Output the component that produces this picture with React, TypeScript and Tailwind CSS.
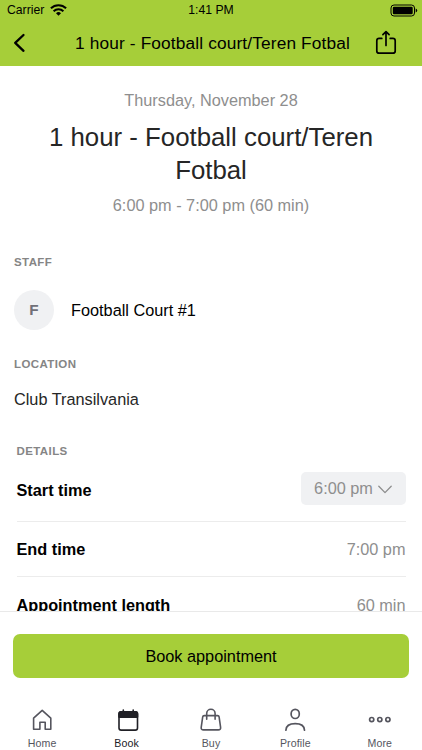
import React, { useState } from 'react';

type TabId = 'home' | 'book' | 'buy' | 'profile' | 'more';

const HomeIcon = () => (
  <svg width="24" height="24" viewBox="0 0 24 24" fill="none" stroke="currentColor" strokeWidth="1.6" strokeLinejoin="round">
    <path d="M3.6 11.2 12.2 3.3l8.600 7.900v11h-5.600v-6.900H9.900v6.900H3.600z" />
  </svg>
);

const BookIcon = () => (
  <svg width="24" height="24" viewBox="0 0 24 24" fill="none" stroke="currentColor" strokeWidth="1.6" strokeLinejoin="round">
    <rect x="4" y="4.700" width="18.500" height="18.400" rx="2.200" />
    <path d="M4 6.900q0-2.200 2.200-2.200h14.100q2.200 0 2.200 2.200v3.200H4z" fill="currentColor" />
    <path d="M8.300 3v2M18.200 3v2" strokeLinecap="round" />
  </svg>
);

const BuyIcon = () => (
  <svg width="24" height="24" viewBox="0 0 24 24" fill="none" stroke="currentColor" strokeWidth="1.6" strokeLinecap="round" strokeLinejoin="round">
    <path d="M5.200 8.600h13.400q1.300 0 1.500 1.300l1.500 10.400q.3 2.600-2.300 2.600H4.500q-2.600 0-2.300-2.600L3.700 9.900q.2-1.300 1.500-1.300z" />
    <path d="M7.700 12.200V6.500a4.200 4.200 0 0 1 8.400 0v5.700" />
  </svg>
);

const ProfileIcon = () => (
  <svg width="24" height="24" viewBox="0 0 24 24" fill="none" stroke="currentColor" strokeWidth="1.7" strokeLinecap="round">
    <ellipse cx="12.200" cy="6.900" rx="4.100" ry="4.600" />
    <path d="M2.900 23.200c.2-4.200 3.500-6.500 9.300-6.500s9.100 2.300 9.300 6.500" />
  </svg>
);

const MoreIcon = () => (
  <svg width="24" height="24" viewBox="0 0 24 24" fill="none" stroke="currentColor" strokeWidth="1.7">
    <circle cx="3.700" cy="12.600" r="2.100" />
    <circle cx="11.800" cy="12.600" r="2.100" />
    <circle cx="19.900" cy="12.600" r="2.100" />
  </svg>
);

const TABS: { id: TabId; label: string; icon: React.FC }[] = [
  { id: 'home', label: 'Home', icon: HomeIcon },
  { id: 'book', label: 'Book', icon: BookIcon },
  { id: 'buy', label: 'Buy', icon: BuyIcon },
  { id: 'profile', label: 'Profile', icon: ProfileIcon },
  { id: 'more', label: 'More', icon: MoreIcon },
];

const StatusBar = () => (
  <div className="grid h-5 grid-cols-3 items-center px-[7px] text-[12.2px] leading-5">
    <div className="flex items-center gap-[6px]">
      <span>Carrier</span>
      <svg width="17" height="12" viewBox="0 0 17 12" fill="none" stroke="currentColor" strokeWidth="2">
        <path d="M.9 4.300a10.800 10.800 0 0 1 15.200 0" />
        <path d="M3.600 7.200a7 7 0 0 1 9.800 0" />
        <path d="M8.500 11.700 6 9.200a3.500 3.500 0 0 1 5 0z" fill="currentColor" stroke="none" />
      </svg>
    </div>
    <span className="text-center">1:41 PM</span>
    <svg className="-mr-[3px] justify-self-end" width="28" height="13" viewBox="0 0 28 13">
      <rect x="1" y="1" width="23.500" height="11" rx="3" fill="none" stroke="currentColor" strokeWidth="1" />
      <rect x="2.800" y="2.800" width="19.900" height="7.400" rx="1.300" fill="currentColor" />
      <path d="M25.700 4.500q1.500.6 1.500 2t-1.500 2z" fill="currentColor" />
    </svg>
  </div>
);

const Header = () => (
  <header className="h-[66px] shrink-0 bg-[#a6ce39] text-black">
    <StatusBar />
    <div className="flex h-[46px] items-center justify-between pl-[13px] pr-[24px]">
      <button aria-label="Back" className="w-[38px]">
        <svg width="14" height="20" viewBox="0 0 14 20" fill="none" stroke="currentColor" strokeWidth="2.300" strokeLinecap="round" strokeLinejoin="round">
          <path d="M10.500 2 2.200 9.900l8.300 7.900" />
        </svg>
      </button>
      <h1 className="whitespace-nowrap text-[17.300px] tracking-[0.140px]">1 hour - Football court/Teren Fotbal</h1>
      <button aria-label="Share">
        <svg width="24" height="26" viewBox="0 0 24 26" fill="none" stroke="currentColor" strokeWidth="1.700" strokeLinecap="round" strokeLinejoin="round">
          <path d="M7.800 8.400H5.100q-2.300 0-2.300 2.300v10.200q0 2.300 2.300 2.300h13.800q2.300 0 2.300-2.300V10.700q0-2.300-2.300-2.300h-2.700" />
          <path d="M12 15.500V1.800M8.900 4.700 12 1.600l3.100 3.100" />
        </svg>
      </button>
    </div>
  </header>
);

const SectionTitle = ({ children }: { children: React.ReactNode }) => (
  <h3 className="text-[11.5px] font-bold uppercase leading-4 tracking-[0.4px] text-[#858585]">{children}</h3>
);

const App: React.FC = () => {
  const [activeTab, setActiveTab] = useState<TabId>('book');

  return (
    <div className="flex h-[750px] w-[422px] flex-col overflow-hidden bg-white font-['Liberation_Sans',Arial,sans-serif] text-[16.3px] leading-5">
      <Header />

      <main className="flex min-h-0 flex-1 flex-col overflow-hidden">
        <section className="flex flex-col items-center pt-6 text-center text-[#8e8e8e]">
          <p>Thursday, November 28</p>
          <h2 className="mt-[11px] w-[350px] text-[25.8px] leading-[33px] text-[#262626]">1 hour - Football court/Teren Fotbal</h2>
          <p className="mt-[8px]">6:00 pm - 7:00 pm (60 min)</p>
        </section>

        <section className="mt-[39px] px-[14px]">
          <SectionTitle>Staff</SectionTitle>
          <div className="mt-5 flex items-center gap-[17px]">
            <div className="flex size-[40px] items-center justify-center rounded-full bg-[#f0f1f3] text-[15.300px] font-bold text-[#707078]">F</div>
            <span className="text-black">Football Court #1</span>
          </div>
        </section>

        <section className="mt-[26px] px-[14px]">
          <SectionTitle>Location</SectionTitle>
          <p className="mt-[17px] text-[#262626]">Club Transilvania</p>
        </section>

        <section className="mt-[34px] pl-[16.5px] pr-[16.5px]">
          <SectionTitle>Details</SectionTitle>
          <div className="flex h-[63px] items-center justify-between border-b border-[#ececec]">
            <span className="font-bold text-black">Start time</span>
            <button className="mb-[4px] flex h-[33px] w-[105px] items-center justify-center gap-[5px] rounded-[5px] bg-[#f0f1f3] text-[#8e8e8e]">
              6:00 pm
              <svg className="mt-[2px]" width="14" height="9" viewBox="0 0 14 9" fill="none" stroke="currentColor" strokeWidth="1.300" strokeLinecap="round" strokeLinejoin="round">
                <path d="M.8 1.200 7 7.600l6.200-6.400" />
              </svg>
            </button>
          </div>
          <div className="flex h-[55px] items-center justify-between border-b border-[#ececec]">
            <span className="font-bold text-black">End time</span>
            <span className="text-[#8e8e8e]">7:00 pm</span>
          </div>
          <div className="flex h-[56px] items-center justify-between">
            <span className="font-bold text-black">Appointment length</span>
            <span className="text-[#8e8e8e]">60 min</span>
          </div>
        </section>
      </main>

      <footer className="h-[139px] shrink-0 border-t border-[#e9e9e9] bg-white">
        <div className="px-[13px] pt-[22px]">
          <button className="h-[44px] w-full rounded-[7px] bg-[#a6ce39] text-black">Book appointment</button>
        </div>
        <nav className="mt-[29px] grid grid-cols-5">
          {TABS.map(({ id, label, icon: Icon }) => (
            <button
              key={id}
              onClick={() => setActiveTab(id)}
              className={`flex flex-col items-center text-[10.600px] leading-3 tracking-[0.140px] ${activeTab === id ? 'text-[#202026]' : 'text-[#55555e]'}`}
            >
              <Icon />
              <span className="mt-[6px]">{label}</span>
            </button>
          ))}
        </nav>
      </footer>
    </div>
  );
};

export default App;
